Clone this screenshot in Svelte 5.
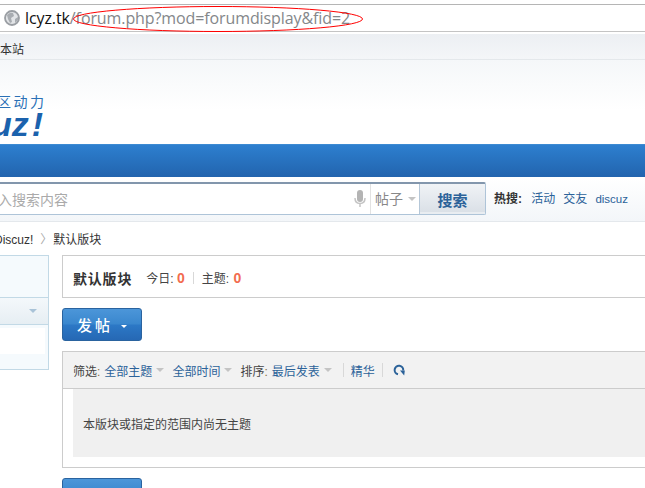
<script>
  const filters = [
    { label: "筛选", items: ["全部主题", "全部时间"] },
    { label: "排序", items: ["最后发表"] },
  ];
  const hot = ["活动", "交友", "discuz"];
</script>

<div class="page">
  <div class="browser">
    <svg class="globe" width="16" height="16" viewBox="0 0 16 16">
      <circle cx="8" cy="8" r="7" fill="#e2e4e7" stroke="#9a9ea3" stroke-width="1.800" />
      <path d="M3 5q3-3 6-2l1 3-3 2 1 4-2 1-2-4zM11 9l3-2 0 3-3 3z" fill="#a8acb1" />
    </svg>
    <span class="host">lcyz.tk</span><span class="path">/forum.php?mod=forumdisplay&amp;fid=2</span>
    <svg class="mark" width="292" height="28" viewBox="0 0 292 28">
      <ellipse cx="146" cy="14" rx="144.5" ry="12.5" fill="none" stroke="#f00" stroke-width="1" />
    </svg>
  </div>

  <div class="topbar"><span>本站</span></div>

  <header>
    <div class="logo">
      <div class="slogan">区动力</div>
      <div class="brand">uz<span>!</span></div>
    </div>
  </header>

  <nav></nav>

  <div class="searchbar">
    <div class="search">
      <div class="input">入搜索内容</div>
      <svg class="mic" width="12" height="18" viewBox="0 0 12 18">
        <rect x="3" y="0" width="6" height="12" rx="3" fill="#b4b4b4" />
        <path d="M1 8q0 5.500 5 5.500t5-5.500M6 13.500v3.500" fill="none" stroke="#c4c4c4" stroke-width="1.500" />
      </svg>
      <div class="kind">帖子<i class="tri"></i></div>
      <button class="go">搜索</button>
    </div>
    <div class="hot">
      <strong>热搜:</strong>
      {#each hot as h}<a href="#top">{h}</a>{/each}
    </div>
  </div>

  <div class="crumbs"><span>Discuz!</span><em>〉</em><span>默认版块</span></div>

  <div class="body">
    <aside>
      <div class="side-top"></div>
      <div class="side-row"><i class="tri side-tri"></i></div>
      <div class="side-item"></div>
    </aside>

    <main>
      <div class="title">
        <h1>默认版块</h1>
        <span class="stat">今日<b>:</b> <strong>0</strong></span>
        <span class="pipe"></span>
        <span class="stat">主题<b>:</b> <strong>0</strong></span>
      </div>

      <button class="post">发帖<i class="down"></i></button>

      <div class="list">
        <div class="filter">
          {#each filters as f}
            <span class="lab">{f.label}<b>:</b></span>
            {#each f.items as it}<a href="#top">{it}</a><i class="tri"></i>{/each}
          {/each}
          <span class="pipe p1"></span>
          <a href="#top">精华</a>
          <span class="pipe p2"></span>
          <svg class="refresh" width="12" height="12" viewBox="0 0 12 12">
            <path d="M5 10.200A4.300 4.300 0 1 1 10.200 6.500" fill="none" stroke="#2b6299" stroke-width="2" />
            <path d="M7 6.500l4.800 0-.6 5z" fill="#2b6299" />
          </svg>
        </div>
        <div class="empty">本版块或指定的范围内尚无主题</div>
      </div>

      <button class="post">发帖<i class="down"></i></button>
    </main>
  </div>
</div>

<style>
  :global(body) {
    margin: 0;
    background: #fff;
  }

  .page {
    width: 645px;
    height: 488px;
    overflow: hidden;
    position: relative;
    font-family: "Liberation Sans", "Noto Sans CJK SC", sans-serif;
    font-size: 12px;
    color: #444;
  }

  a {
    color: #2b6299;
    text-decoration: none;
  }

  i {
    display: inline-block;
  }

  .tri {
    width: 0;
    height: 0;
    border: 4px solid transparent;
    border-top-color: #c4c4c4;
    border-bottom: 0;
  }

  .browser {
    height: 26px;
    margin-top: 4px;
    border-top: 1px solid #b5b5b5;
    border-bottom: 1px solid #c4c4c4;
    display: flex;
    align-items: center;
    padding-left: 4px;
    position: relative;
    font-family: "Open Sans", sans-serif;
    font-size: 16px;
    letter-spacing: -0.1px;
    white-space: nowrap;
  }

  .globe {
    margin-right: 5px;
  }

  .host {
    color: #111;
  }

  .path {
    color: #84878a;
  }

  .mark {
    position: absolute;
    left: 72px;
    top: 0;
  }

  .topbar {
    height: 25px;
    margin-top: 2px;
    background: linear-gradient(#eceff3, #f4f6f8);
    border-bottom: 1px solid #e4e8eb;
    line-height: 32px;
    color: #333;
  }

  header {
    height: 84px;
    background: linear-gradient(#f5f7f9, #fff 60%);
    position: relative;
    overflow: hidden;
  }

  .logo {
    padding-top: 34px;
    margin-left: -3px;
    color: #2a70b6;
  }

  .slogan {
    font-size: 14px;
    line-height: 16px;
    letter-spacing: 2.500px;
  }

  .brand {
    margin: 2px 0 0 -6px;
    font-size: 34px;
    line-height: 25px;
    font-weight: bold;
    font-style: italic;
    color: #1b62ad;
    white-space: nowrap;
  }

  .brand span {
    margin-left: 3px;
  }

  nav {
    height: 32px;
    border-top: 1px solid #3c8ad2;
    background: linear-gradient(#2d7fcf, #2264ae);
  }

  .searchbar {
    height: 45px;
    box-sizing: border-box;
    border-bottom: 1px solid #e4e8ec;
    background: linear-gradient(#fff, #f3f6f9);
    padding-top: 5px;
    display: flex;
    align-items: flex-start;
  }

  .search {
    width: 486px;
    height: 33px;
    box-sizing: border-box;
    border: 1px solid #aec4d8;
    border-top: 2px solid #8296ac;
    border-left: 0;
    border-radius: 0 2px 2px 0;
    background: #fff;
    display: flex;
    align-items: stretch;
  }

  .input {
    width: 354px;
    font-size: 14px;
    line-height: 33px;
    color: #aaa;
    text-indent: -2px;
  }

  .mic {
    margin: 6px 4px 0 0;
  }

  .kind {
    width: 49px;
    box-sizing: border-box;
    border-left: 1px solid #e2e2e2;
    padding-left: 4px;
    font-size: 14px;
    line-height: 31px;
    color: #888;
    display: flex;
    align-items: center;
    gap: 5px;
  }

  .go {
    flex: 1;
    border: 0;
    border-left: 1px solid #b5c7d8;
    padding: 0;
    background: linear-gradient(#f0f3f6, #d9dfe6);
    box-shadow: inset 0 -2px 0 #e9edf1;
    font: bold 15px "Noto Sans CJK SC", sans-serif;
    color: #2b6299;
  }

  .hot {
    margin-left: 8px;
    height: 33px;
    line-height: 34px;
    white-space: nowrap;
  }

  .hot strong {
    color: #333;
    margin-right: 6px;
  }

  .hot a {
    margin-right: 8px;
  }

  .hot a:last-child {
    font-size: 11.500px;
  }

  .crumbs {
    height: 33px;
    line-height: 36px;
    margin-left: -6px;
    color: #333;
    white-space: nowrap;
  }

  .crumbs em {
    font-style: normal;
    color: #aaa;
    margin: 0 1px 0 7px;
  }

  .body {
    display: flex;
    align-items: flex-start;
    gap: 13px;
  }

  aside {
    width: 49px;
    height: 115px;
    box-sizing: border-box;
    border: 1px solid #c2d9e6;
    border-left: 0;
    background: #f5fafd;
    flex: none;
  }

  .side-top {
    height: 41px;
    border-bottom: 1px solid #c2d9e6;
  }

  .side-row {
    height: 26px;
    background: linear-gradient(#f4f8fb, #e6eef3);
    border-bottom: 1px solid #c2d9e6;
    display: flex;
    justify-content: flex-end;
    align-items: center;
    padding-right: 11px;
  }

  .side-tri {
    border-top-color: #a9c3d8;
  }

  .side-item {
    height: 26px;
    margin: 3px 3px 0 0;
    background: #fff;
  }

  main {
    width: 700px;
    flex: none;
  }

  .title {
    height: 43px;
    box-sizing: border-box;
    border: 1px solid #ccc;
    display: flex;
    align-items: center;
    padding: 2px 0 0 10px;
  }

  h1 {
    margin: 0 14px 0 0;
    font-size: 14px;
    font-weight: bold;
    letter-spacing: 0.800px;
    color: #333;
  }

  .stat b {
    font-weight: normal;
  }

  .stat strong {
    color: #f26c4f;
    font-size: 14px;
  }

  .title .pipe {
    margin: 0 8px;
    height: 12px;
  }

  .title .stat:last-child strong {
    margin-left: 1px;
  }

  .pipe {
    display: inline-block;
    width: 1px;
    height: 14px;
    background: #d8d8d8;
  }

  .post {
    display: block;
    width: 80px;
    height: 33px;
    margin: 10px 0;
    padding: 0;
    border: 1px solid #2a639f;
    border-radius: 3px;
    background: linear-gradient(#4c96d9, #3a87ce 48%, #2c78c6 52%, #2668b4);
    color: #fff;
    font: 500 15px "Noto Sans CJK SC", sans-serif;
    letter-spacing: 3px;
  }

  .down {
    width: 0;
    height: 0;
    margin-left: 8px;
    vertical-align: middle;
    border: 3px solid transparent;
    border-top-color: #fff;
    border-bottom: 0;
  }

  .list {
    height: 117px;
    box-sizing: border-box;
    border: 1px solid #ccc;
  }

  .filter {
    height: 37px;
    box-sizing: border-box;
    border-bottom: 1px solid #ccc;
    background: #f2f2f2;
    display: flex;
    align-items: center;
    padding-left: 10px;
    white-space: nowrap;
  }

  .lab {
    margin-right: 4px;
  }

  .lab b {
    font-weight: normal;
    color: #8a6d3b;
  }

  .filter .tri {
    margin: 0 8px 0 4px;
  }

  .p1 {
    margin: 0 7px 0 3px;
  }

  .p2 {
    margin: 0 10px 0 7px;
  }

  .empty {
    height: 68px;
    margin: 0 0 0 10px;
    padding-left: 10px;
    background: #f0f0f0;
    line-height: 72px;
    color: #444;
  }
</style>
